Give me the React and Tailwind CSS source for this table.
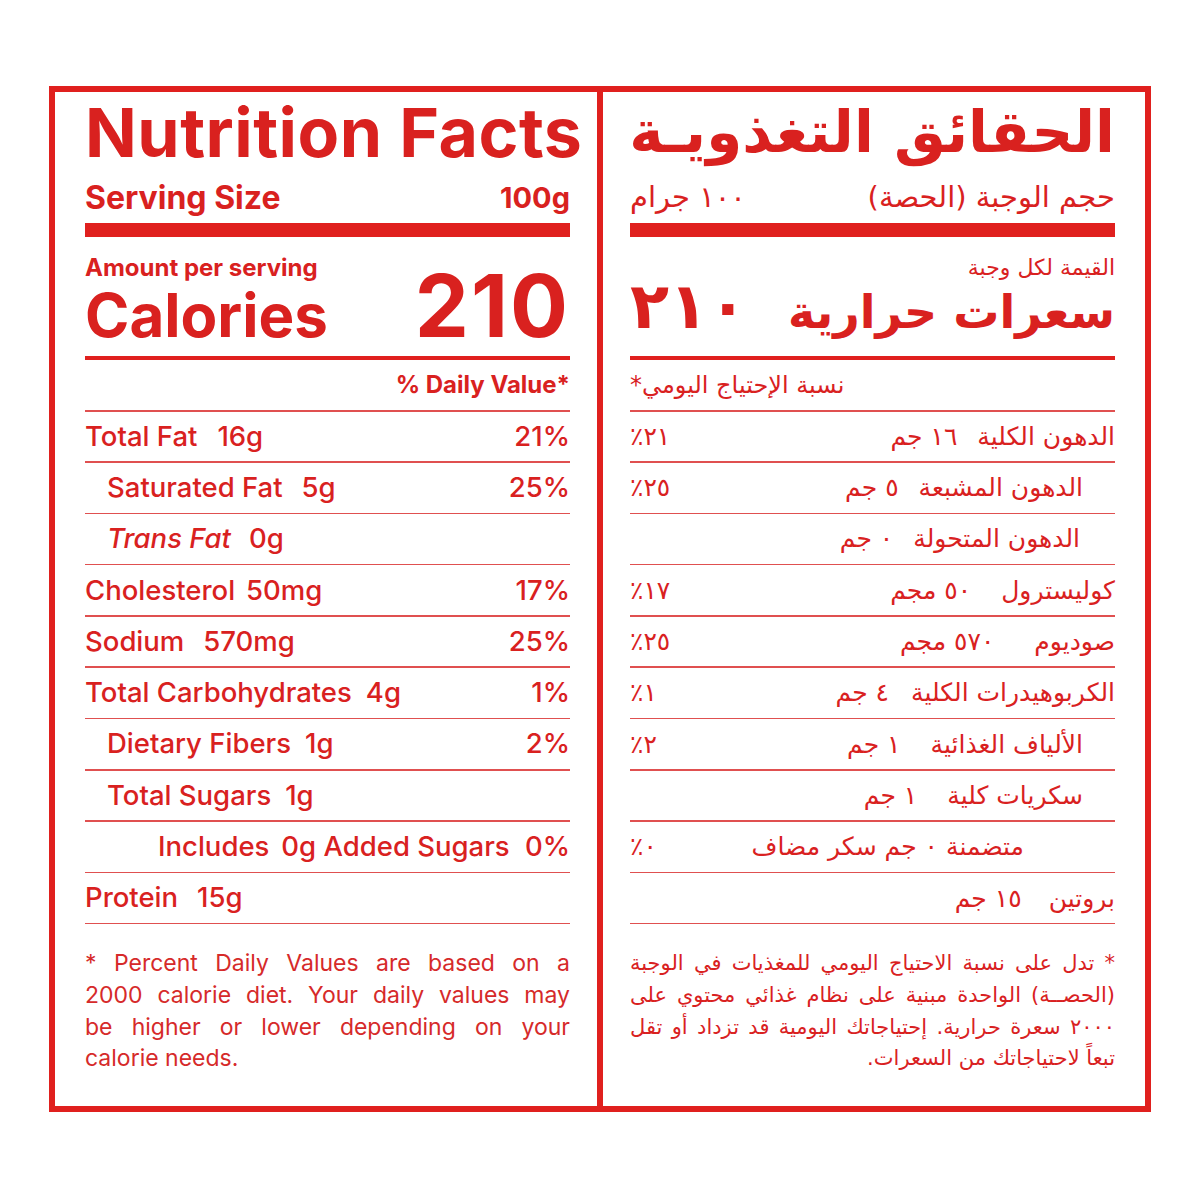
const leftRows = [
  { label: 'Total Fat', amt: '16g', dv: '21%', pad: 'pl-0', gap: 'ml-[20px]' },
  { label: 'Saturated Fat', amt: '5g', dv: '25%', pad: 'pl-[22px]', gap: 'ml-[19px]' },
  { label: 'Trans Fat', amt: '0g', dv: '', pad: 'pl-[22px]', gap: 'ml-[18px]', italic: true },
  { label: 'Cholesterol', amt: '50mg', dv: '17%', pad: 'pl-0', gap: 'ml-[11px]' },
  { label: 'Sodium', amt: '570mg', dv: '25%', pad: 'pl-0', gap: 'ml-[19px]' },
  { label: 'Total Carbohydrates', amt: '4g', dv: '1%', pad: 'pl-0', gap: 'ml-[14px]' },
  { label: 'Dietary Fibers', amt: '1g', dv: '2%', pad: 'pl-[22px]', gap: 'ml-[14px]' },
  { label: 'Total Sugars', amt: '1g', dv: '', pad: 'pl-[22px]', gap: 'ml-[14px]' },
  { label: 'Includes', amt: '0g Added Sugars', dv: '0%', pad: 'pl-[73px]', gap: 'ml-[12px]' },
  { label: 'Protein', amt: '15g', dv: '', pad: 'pl-0', gap: 'ml-[19px]' },
];

const rightRows = [
  { label: 'الدهون الكلية', amt: '١٦ جم', dv: '٢١٪', pad: 'pr-0', gap: 'mr-[20px]' },
  { label: 'الدهون المشبعة', amt: '٥ جم', dv: '٢٥٪', pad: 'pr-[32px]', gap: 'mr-[20px]' },
  { label: 'الدهون المتحولة', amt: '٠ جم', dv: '', pad: 'pr-[35px]', gap: 'mr-[20px]' },
  { label: 'كوليسترول', amt: '٥٠ مجم', dv: '١٧٪', pad: 'pr-0', gap: 'mr-[30px]' },
  { label: 'صوديوم', amt: '٥٧٠ مجم', dv: '٢٥٪', pad: 'pr-0', gap: 'mr-[40px]' },
  { label: 'الكربوهيدرات الكلية', amt: '٤ جم', dv: '١٪', pad: 'pr-0', gap: 'mr-[22px]' },
  { label: 'الألياف الغذائية', amt: '١ جم', dv: '٢٪', pad: 'pr-[32px]', gap: 'mr-[30px]' },
  { label: 'سكريات كلية', amt: '١ جم', dv: '', pad: 'pr-[32px]', gap: 'mr-[30px]' },
  { label: 'متضمنة ٠ جم سكر مضاف', amt: '', dv: '٠٪', pad: 'pr-[91px]', gap: 'mr-0' },
  { label: 'بروتين', amt: '١٥ جم', dv: '', pad: 'pr-0', gap: 'mr-[27px]' },
];

function Thin() {
  return <div className="h-[1.5px] shrink-0 bg-[#e05050]" />;
}

function LeftPanel() {
  return (
    <section className="w-[542px] shrink-0 pl-[30px] pr-[27px] flex flex-col font-['Inter',sans-serif] text-[#d9211f] whitespace-nowrap">
      <div className="h-[80px] shrink-0 flex items-center">
        <h1 className="text-[68px] font-bold leading-none tracking-[0.5px]">Nutrition Facts</h1>
      </div>
      <div className="h-[51px] shrink-0 flex items-center justify-between font-bold leading-none">
        <span className="text-[32px]">Serving Size</span>
        <span className="text-[29px]">100g</span>
      </div>
      <div className="h-[14px] shrink-0 bg-[#e0201e]" />
      <div className="mt-[20px] h-[22px] shrink-0 flex items-center text-[24px] font-bold leading-none">Amount per serving</div>
      <div className="h-[77px] shrink-0 flex items-baseline justify-between font-bold">
        <span className="text-[60px] leading-[44px]">Calories</span>
        <span className="text-[86px] leading-[54px] tracking-[2px]">210</span>
      </div>
      <div className="h-[4px] shrink-0 bg-[#e0201e]" />
      <div className="h-[50px] shrink-0 flex items-center justify-end text-[24px] font-bold leading-none">% Daily Value*</div>
      <Thin />
      {leftRows.map((r) => (
        <div key={r.label} className="shrink-0">
          <div className={`h-[49.8px] flex items-center justify-between text-[27.5px] font-medium leading-none ${r.pad}`}>
            <span className="flex items-baseline">
              <span className={r.italic ? 'italic' : ''}>{r.label}</span>
              <span className={r.gap}>{r.amt}</span>
            </span>
            <span>{r.dv}</span>
          </div>
          <Thin />
        </div>
      ))}
      <div className="pt-[24px] text-[23px] leading-[31.6px] text-[#d62a2a] font-normal">
        <p className="text-justify [text-align-last:justify]">* Percent Daily Values are based on a</p>
        <p className="text-justify [text-align-last:justify]">2000 calorie diet. Your daily values may</p>
        <p className="text-justify [text-align-last:justify]">be higher or lower depending on your</p>
        <p>calorie needs.</p>
      </div>
    </section>
  );
}

function RightPanel() {
  return (
    <section dir="rtl" className="w-[542px] shrink-0 pl-[27px] pr-[30px] flex flex-col font-['DejaVu_Sans',sans-serif] text-[#d9211f] whitespace-nowrap">
      <div className="h-[80px] shrink-0 flex items-center">
        <h1 className="text-[58px] font-bold leading-none">الحقائق التغذويـة</h1>
      </div>
      <div className="h-[51px] shrink-0 flex items-center justify-between text-[29px] leading-none">
        <span>حجم الوجبة (الحصة)</span>
        <span>١٠٠ جرام</span>
      </div>
      <div className="h-[14px] shrink-0 bg-[#e0201e]" />
      <div className="mt-[20px] h-[22px] shrink-0 flex items-center text-[22px] leading-none">القيمة لكل وجبة</div>
      <div className="h-[77px] shrink-0 flex items-baseline justify-between font-bold">
        <span className="text-[46px] leading-[44px]">سعرات حرارية</span>
        <span className="text-[64px] leading-[54px]">٢١٠</span>
      </div>
      <div className="h-[4px] shrink-0 bg-[#e0201e]" />
      <div className="h-[50px] shrink-0 flex items-center justify-end text-[24px] leading-none">نسبة الإحتياج اليومي*</div>
      <Thin />
      {rightRows.map((r) => (
        <div key={r.label} className="shrink-0">
          <div className={`h-[49.8px] flex items-center justify-between text-[25px] leading-none ${r.pad}`}>
            <span className="flex items-baseline">
              <span>{r.label}</span>
              {r.amt && <span className={r.gap}>{r.amt}</span>}
            </span>
            <span>{r.dv}</span>
          </div>
          <Thin />
        </div>
      ))}
      <div className="pt-[24px] text-[21px] leading-[31.6px]">
        <p className="text-justify [text-align-last:justify]">* تدل على نسبة الاحتياج اليومي للمغذيات في الوجبة</p>
        <p className="text-justify [text-align-last:justify]">(الحصــة) الواحدة مبنية على نظام غذائي محتوي على</p>
        <p className="text-justify [text-align-last:justify]">٢٠٠٠ سعرة حرارية. إحتياجاتك اليومية قد تزداد أو تقل</p>
        <p>تبعاً لاحتياجاتك من السعرات.</p>
      </div>
    </section>
  );
}

export default function App() {
  return (
    <div className="w-[1200px] h-[1200px] bg-white pt-[86px] pl-[49px]">
      <div className="w-[1102px] h-[1026px] border-[6px] border-[#e0201e] flex">
        <LeftPanel />
        <div className="w-[6px] shrink-0 bg-[#e0201e]" />
        <RightPanel />
      </div>
    </div>
  );
}
